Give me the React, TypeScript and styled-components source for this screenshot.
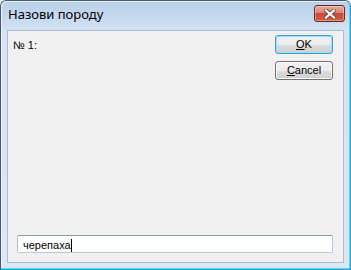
import React from "react";
import styled, { createGlobalStyle } from "styled-components";

const Global = createGlobalStyle`
  html, body { margin: 0; padding: 0; background: #ffffff; }
  #root { width: 351px; height: 270px; }
`;

const Window = styled.div`
  box-sizing: border-box;
  width: 351px;
  height: 270px;
  display: flex;
  flex-direction: column;
  border: 1px solid #4a5a6e;
  border-right-color: #2a9fd0;
  border-bottom-color: #2a9fd0;
  border-radius: 6px 6px 0 0;
  background: linear-gradient(to bottom, #b9d1ea 0px, #c9dbef 20px, #d6e4f4 30px, #dbe7f5 100%);
  box-shadow: inset -1px -1px 0 #5fd3f5, inset 1px 1px 0 #e9f1fa;
  font-family: "Liberation Sans", Arial, sans-serif;
`;

const TitleBar = styled.div`
  height: 29px;
  flex: none;
  display: flex;
  align-items: flex-start;
  justify-content: space-between;
  padding: 0 5px 0 7px;
`;

const Title = styled.span`
  margin-top: 5px;
  font-family: "Noto Sans", "Open Sans", sans-serif;
  font-size: 13px;
  line-height: 17px;
  color: #000;
`;

const CloseButton = styled.div`
  box-sizing: border-box;
  margin-top: 4px;
  width: 31px;
  height: 17px;
  border: 1px solid #6e2620;
  border-radius: 3px;
  background: linear-gradient(to bottom, #e9a99f 0%, #d98677 45%, #c54a3c 50%, #d5613d 100%);
  box-shadow: inset 0 0 0 1px rgba(255, 255, 255, 0.35);
  display: flex;
  align-items: center;
  justify-content: center;
`;

const Frame = styled.div`
  flex: 1;
  display: flex;
  padding: 0 6px 6px 6px;
`;

const Client = styled.div`
  flex: 1;
  display: flex;
  flex-direction: column;
  background: #f0f0f0;
  border: 1px solid #a9bcd4;
  padding: 4px 10px 9px 5px;
  font-size: 11px;
  color: #000;
`;

const TopRow = styled.div`
  display: flex;
  justify-content: space-between;
  align-items: flex-start;
  flex: 1;
`;

const Label = styled.div`
  margin-top: 4px;
  line-height: 13px;
`;

const ButtonColumn = styled.div`
  display: flex;
  flex-direction: column;
  gap: 7px;
`;

const Button = styled.div<{ $default?: boolean }>`
  box-sizing: border-box;
  width: 58px;
  height: 19px;
  border: 1px solid ${(p) => (p.$default ? "#3c9ed8" : "#707070")};
  border-radius: 3px;
  background: linear-gradient(to bottom, #f2f2f2 0%, #ebebeb 50%, #dddddd 51%, #cfcfcf 100%);
  box-shadow: ${(p) => (p.$default ? "inset 0 0 0 1px #8fe4fb" : "inset 0 0 0 1px #fcfcfc")};
  display: flex;
  align-items: center;
  justify-content: center;
  font-size: 11px;
  line-height: 13px;
  color: #000;
`;

const Accel = styled.span`
  text-decoration: underline;
`;

const TextBox = styled.div`
  box-sizing: border-box;
  margin-left: 4px;
  height: 18px;
  border: 1px solid #b5cbe0;
  border-top-color: #7f9db9;
  border-left-color: #a9bfd6;
  border-radius: 2px;
  background: #ffffff;
  padding: 2px 4px 0 5px;
  display: flex;
  align-items: center;
  font-size: 11px;
  line-height: 13px;
`;

const Caret = styled.span`
  display: inline-block;
  width: 1px;
  height: 13px;
  background: #000;
  margin-left: 0px;
`;

export default function App() {
  return (
    <>
      <Global />
      <Window>
        <TitleBar>
          <Title>Назови породу</Title>
          <CloseButton>
            <svg width="12" height="10" viewBox="0 0 12 10">
              <path d="M2 1.5 L10 8.5 M10 1.5 L2 8.5" stroke="#6b4a46" strokeWidth="4" strokeLinecap="square" />
              <path d="M2 1.5 L10 8.5 M10 1.5 L2 8.5" stroke="#ffffff" strokeWidth="2.2" strokeLinecap="square" />
            </svg>
          </CloseButton>
        </TitleBar>
        <Frame>
          <Client>
            <TopRow>
              <Label>№ 1:</Label>
              <ButtonColumn>
                <Button $default>
                  <span>
                    <Accel>O</Accel>K
                  </span>
                </Button>
                <Button>
                  <span>
                    <Accel>C</Accel>ancel
                  </span>
                </Button>
              </ButtonColumn>
            </TopRow>
            <TextBox>
              черепаха
              <Caret />
            </TextBox>
          </Client>
        </Frame>
      </Window>
    </>
  );
}
